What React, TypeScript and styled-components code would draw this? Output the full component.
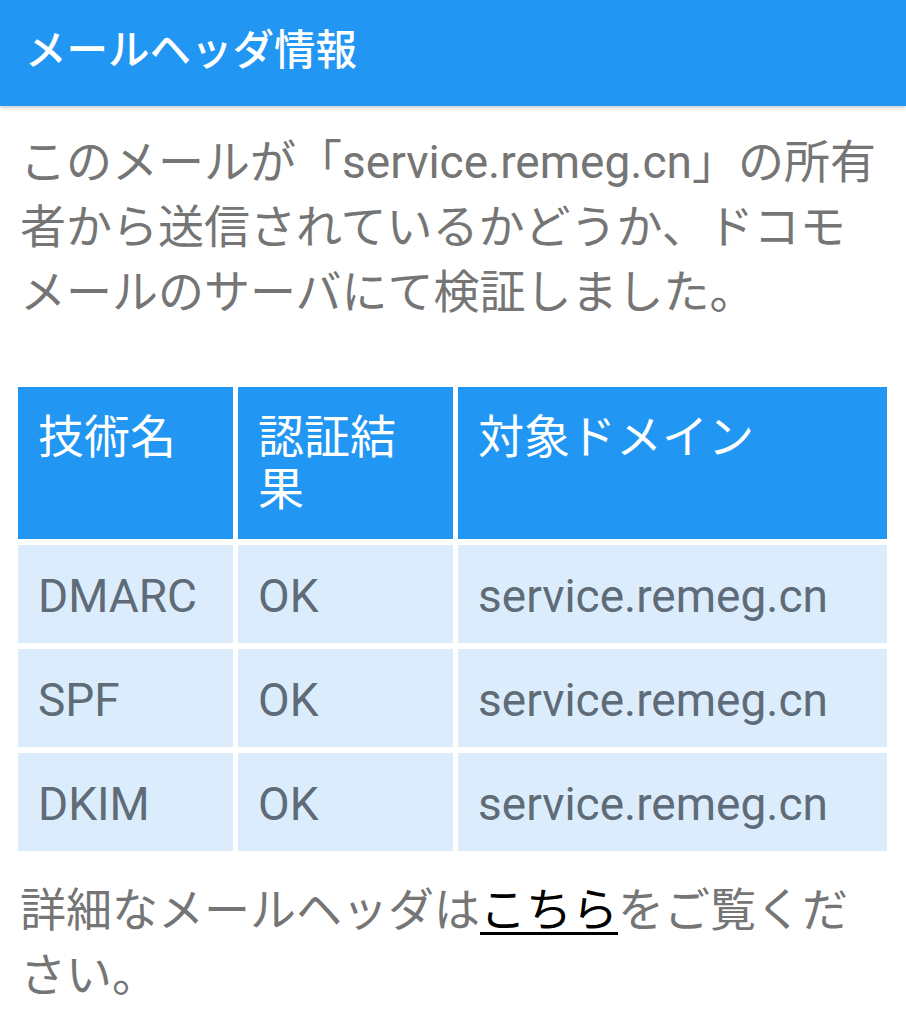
import React from "react";
import styled, { createGlobalStyle } from "styled-components";

const Global = createGlobalStyle`
  html, body { margin: 0; padding: 0; background: #ffffff; }
  body { font-family: "Roboto", "Noto Sans CJK JP", sans-serif; }
`;

const Page = styled.div`
  width: 906px;
  min-height: 1024px;
  background: #ffffff;
  display: flex;
  flex-direction: column;
`;

const HeaderBar = styled.header`
  height: 106px;
  background: #2196f3;
  box-shadow: 0 2px 3px rgba(0, 0, 0, 0.18);
  display: flex;
  align-items: center;
  padding: 0 25px;
  box-sizing: border-box;
`;

const Title = styled.h1`
  margin: 0 0 4px 0;
  font-size: 41.5px;
  font-weight: 500;
  color: #ffffff;
  line-height: 1;
`;

const Body = styled.main`
  display: flex;
  flex-direction: column;
  padding: 0 18px 0 18px;
`;

const Paragraph = styled.p<{ $top: number; $bottom: number }>`
  margin: ${(p) => p.$top}px 0 ${(p) => p.$bottom}px 2px;
  font-size: 46px;
  line-height: 65px;
  color: #757575;
`;

const Link = styled.a`
  color: #000000;
  text-decoration: underline;
  text-decoration-thickness: 3px;
  text-underline-offset: 6px;
`;

const Grid = styled.div`
  display: grid;
  grid-template-columns: 215px 215px 1fr;
  column-gap: 5px;
  row-gap: 6px;
  width: 869px;
`;

const HeadCell = styled.div`
  background: #2196f3;
  color: #ffffff;
  font-size: 46px;
  line-height: 52px;
  padding: 24px 20px;
  min-height: 104px;
`;

const DataCell = styled.div`
  background: #dbedfd;
  color: #5f6b76;
  font-size: 46px;
  line-height: 52px;
  padding: 25px 20px 21px;
  height: 52px;
`;

const rows = [
  ["DMARC", "OK", "service.remeg.cn"],
  ["SPF", "OK", "service.remeg.cn"],
  ["DKIM", "OK", "service.remeg.cn"],
];

export default function App() {
  return (
    <Page>
      <Global />
      <HeaderBar>
        <Title>メールヘッダ情報</Title>
      </HeaderBar>
      <Body>
        <Paragraph $top={24} $bottom={62}>
          このメールが「service.remeg.cn」の所有者から送信されているかどうか、ドコモメールのサーバにて検証しました。
        </Paragraph>
        <Grid>
          <HeadCell>技術名</HeadCell>
          <HeadCell>認証結果</HeadCell>
          <HeadCell>対象ドメイン</HeadCell>
          {rows.map((r, i) =>
            r.map((c, j) => <DataCell key={`${i}-${j}`}>{c}</DataCell>)
          )}
        </Grid>
        <Paragraph $top={27} $bottom={20}>
          詳細なメールヘッダは<Link href="#">こちら</Link>をご覧ください。
        </Paragraph>
      </Body>
    </Page>
  );
}
